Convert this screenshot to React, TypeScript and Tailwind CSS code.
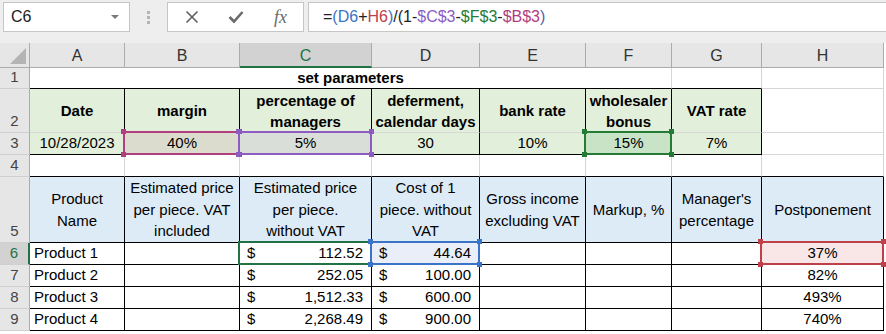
import React from "react";

// gridline + header colours taken from the Excel 2016 default theme
const GRID = "border-r-[#d6d6d6] border-b-[#d6d6d6]";
const BOXED = "border-r-black border-b-black";

type SelProps = { border: string; fill: string; handles?: boolean };

function Sel({ border, fill, handles = true }: SelProps) {
  return (
    <div
      className={`pointer-events-none absolute -left-[2px] -top-[2px] -right-[1px] -bottom-[1px] z-10 border-2 ${border}`}
    >
      {handles && (
        <>
          <span className={`absolute -left-[4px] -top-[4px] w-[5px] h-[5px] ${fill}`} />
          <span className={`absolute -right-[4px] -top-[4px] w-[5px] h-[5px] ${fill}`} />
          <span className={`absolute -left-[4px] -bottom-[4px] w-[5px] h-[5px] ${fill}`} />
          <span className={`absolute -right-[4px] -bottom-[4px] w-[5px] h-[5px] ${fill}`} />
        </>
      )}
    </div>
  );
}

function Cell({
  className = "",
  children,
}: {
  className?: string;
  children?: React.ReactNode;
}) {
  return (
    <div
      className={`relative flex border-r border-b whitespace-nowrap ${className}`}
    >
      {children}
    </div>
  );
}

function RowHead({ n, active = false }: { n: number; active?: boolean }) {
  return (
    <div
      className={`flex items-end justify-center border-b border-b-[#cfcfcf] pb-[1px] text-[15px] leading-[20px] ${
        active
          ? "bg-[#d2d2d2] text-[#217346] border-r-2 border-r-[#217346]"
          : "bg-[#e6e6e6] text-[#444] border-r border-r-[#ababab]"
      }`}
    >
      {n}
    </div>
  );
}

function Money({ value }: { value: string }) {
  return (
    <div className="flex w-full items-center justify-between pl-[7px] pr-[8px]">
      <span>$</span>
      <span>{value}</span>
    </div>
  );
}

const params = [
  { head: ["Date"], value: "10/28/2023" },
  { head: ["margin"], value: "40%" },
  { head: ["percentage of", "managers"], value: "5%" },
  { head: ["deferment,", "calendar days"], value: "30" },
  { head: ["bank rate"], value: "10%" },
  { head: ["wholesaler", "bonus"], value: "15%" },
  { head: ["VAT rate"], value: "7%" },
];

const heads5 = [
  ["Product", "Name"],
  ["Estimated price", "per piece. VAT", "included"],
  ["Estimated price", "per piece.", "without VAT"],
  ["Cost of 1", "piece. without", "VAT"],
  ["Gross income", "excluding VAT"],
  ["Markup, %"],
  ["Manager's", "percentage"],
  ["Postponement"],
];

const products = [
  { name: "Product 1", price: "112.52", cost: "44.64", post: "37%" },
  { name: "Product 2", price: "252.05", cost: "100.00", post: "82%" },
  { name: "Product 3", price: "1,512.33", cost: "600.00", post: "493%" },
  { name: "Product 4", price: "2,268.49", cost: "900.00", post: "740%" },
];

const formula: { t: string; c: string }[] = [
  { t: "=", c: "text-[#222]" },
  { t: "(", c: "text-[#3b73c8]" },
  { t: "D6", c: "text-[#3b73c8]" },
  { t: "+", c: "text-[#222]" },
  { t: "H6", c: "text-[#c0404a]" },
  { t: ")", c: "text-[#3b73c8]" },
  { t: "/(1-", c: "text-[#222]" },
  { t: "$C$3", c: "text-[#8c5cc3]" },
  { t: "-", c: "text-[#222]" },
  { t: "$F$3", c: "text-[#237b36]" },
  { t: "-", c: "text-[#222]" },
  { t: "$B$3", c: "text-[#b13e7f]" },
  { t: ")", c: "text-[#5a5fa8]" },
];

export default function App() {
  return (
    <div className="w-[886px] h-[334px] overflow-hidden bg-white font-['Liberation_Sans',Arial,sans-serif] text-[15px] text-black">
      {/* Formula bar */}
      <div className="flex h-[43px] items-start bg-[#eeeeee] pt-[2px] pl-[3px]">
        <div className="flex h-[30px] w-[127px] items-center justify-between border border-[#c6c6c6] bg-white pl-[7px] pr-[10px] text-[16px] text-[#222]">
          <span>C6</span>
          <span className="h-0 w-0 border-x-[4px] border-t-[4px] border-x-transparent border-t-[#7a7a7a]" />
        </div>
        <div className="flex h-[30px] w-[37px] flex-col items-center justify-center gap-[2px]">
          <span className="h-[3px] w-[3px] bg-[#b4b4b4]" />
          <span className="h-[3px] w-[3px] bg-[#b4b4b4]" />
          <span className="h-[3px] w-[3px] bg-[#b4b4b4]" />
        </div>
        <div className="flex h-[30px] w-[137px] items-center border border-[#c6c6c6] bg-white">
          <div className="flex w-[45px] justify-center pl-[2px]">
            <svg width="14" height="14" viewBox="0 0 14 14">
              <path d="M1.5 1.5 L12.5 12.5 M12.5 1.5 L1.5 12.5" stroke="#5f5f5f" strokeWidth="1.6" fill="none" />
            </svg>
          </div>
          <div className="flex w-[45px] justify-center">
            <svg width="16" height="14" viewBox="0 0 16 14">
              <path d="M1.5 7 L6 11.5 L14.5 2" stroke="#6b6b6b" strokeWidth="2.6" fill="none" />
            </svg>
          </div>
          <div className="flex w-[45px] justify-center font-['Liberation_Serif',serif] text-[18px] italic leading-none text-[#6b6b6b]">
            fx
          </div>
        </div>
        <div className="ml-[4px] flex h-[30px] flex-1 items-center border border-r-0 border-[#c6c6c6] bg-white pl-[14px] text-[16px]">
          {formula.map((f, i) => (
            <span key={i} className={f.c}>
              {f.t}
            </span>
          ))}
        </div>
      </div>

      {/* Sheet */}
      <div className="grid grid-cols-[30px_95px_115px_132px_108px_106px_86px_90px_122px] grid-rows-[25px_21px_44px_22px_22px_66px_22px_22px_22px_22px]">
        {/* column headers */}
        <div className="flex items-end justify-end border-r border-b border-r-[#ababab] border-b-[#ababab] bg-[#e6e6e6] pr-[3px] pb-[3px]">
          <svg width="16" height="16" viewBox="0 0 16 16">
            <polygon points="16,0 16,16 0,16" fill="#b4b4b4" />
          </svg>
        </div>
        {["A", "B", "C", "D", "E", "F", "G", "H"].map((c) =>
          c === "C" ? (
            <div
              key={c}
              className="flex items-center justify-center border-r border-b-2 border-r-[#ababab] border-b-[#217346] bg-[#d2d2d2] pt-[2px] text-[16px] text-[#217346]"
            >
              {c}
            </div>
          ) : (
            <div
              key={c}
              className="flex items-center justify-center border-r border-b border-r-[#ababab] border-b-[#ababab] bg-[#e6e6e6] pt-[1px] text-[16px] text-[#333]"
            >
              {c}
            </div>
          )
        )}

        {/* row 1 */}
        <RowHead n={1} />
        <Cell className="col-span-6 items-center justify-center border-r-[#d6d6d6] border-b-black font-bold">
          set parameters
        </Cell>
        <Cell className="border-r-[#d6d6d6] border-b-black" />
        <Cell className={GRID} />

        {/* row 2 */}
        <RowHead n={2} />
        {params.map((p, i) => (
          <Cell
            key={i}
            className="flex-col items-center justify-center border-r-black border-b-[#d6d6d6] bg-[#e2efda] font-bold leading-[21px]"
          >
            {p.head.map((l) => (
              <span key={l}>{l}</span>
            ))}
          </Cell>
        ))}
        <Cell className={GRID} />

        {/* row 3 */}
        <RowHead n={3} />
        {params.map((p, i) => (
          <Cell
            key={i}
            className={`items-center justify-center ${BOXED} ${
              i === 1 ? "bg-[#dcdcce]" : i === 2 ? "bg-[#d9ded8]" : i === 5 ? "bg-[#c9e3c7]" : "bg-[#e2efda]"
            }`}
          >
            {p.value}
            {i === 1 && <Sel border="border-[#b13e7f]" fill="bg-[#b13e7f]" />}
            {i === 2 && <Sel border="border-[#8c5cc3]" fill="bg-[#8c5cc3]" />}
            {i === 5 && <Sel border="border-[#237b36]" fill="bg-[#237b36]" />}
          </Cell>
        ))}
        <Cell className={GRID} />

        {/* row 4 */}
        <RowHead n={4} />
        {heads5.map((_, i) => (
          <Cell key={i} className="border-r-[#d6d6d6] border-b-black" />
        ))}

        {/* row 5 */}
        <RowHead n={5} />
        {heads5.map((lines, i) => (
          <Cell
            key={i}
            className={`flex-col items-center justify-center bg-[#ddebf7] leading-[21.5px] ${BOXED}`}
          >
            {lines.map((l) => (
              <span key={l}>{l}</span>
            ))}
          </Cell>
        ))}

        {/* rows 6-9 */}
        {products.map((p, r) => (
          <React.Fragment key={p.name}>
            <RowHead n={r + 6} active={r === 0} />
            <Cell className={`items-center pl-[4px] ${BOXED}`}>{p.name}</Cell>
            <Cell className={BOXED} />
            <Cell className={`items-center ${BOXED}`}>
              <Money value={p.price} />
              {r === 0 && <Sel border="border-[#217346]" fill="bg-[#217346]" handles={false} />}
            </Cell>
            <Cell className={`items-center ${BOXED} ${r === 0 ? "bg-[#e9eef8]" : ""}`}>
              <Money value={p.cost} />
              {r === 0 && <Sel border="border-[#3b73c8]" fill="bg-[#3b73c8]" />}
            </Cell>
            <Cell className={BOXED} />
            <Cell className={BOXED} />
            <Cell className={BOXED} />
            <Cell className={`items-center justify-center ${BOXED} ${r === 0 ? "bg-[#f9e6e6]" : ""}`}>
              {p.post}
              {r === 0 && <Sel border="border-[#c0404a]" fill="bg-[#c0404a]" />}
            </Cell>
          </React.Fragment>
        ))}
      </div>
    </div>
  );
}
